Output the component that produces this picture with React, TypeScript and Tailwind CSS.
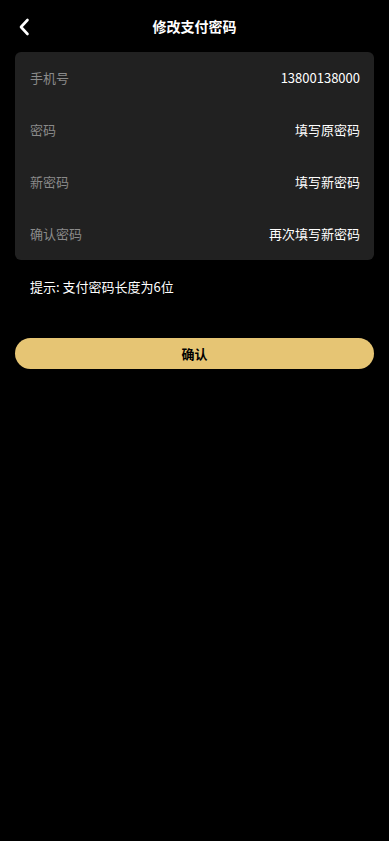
const rows = [
  { label: '手机号', value: '13800138000' },
  { label: '密码', value: '填写原密码' },
  { label: '新密码', value: '填写新密码' },
  { label: '确认密码', value: '再次填写新密码' },
];

export default function App() {
  return (
    <div
      className="min-h-[841px] bg-black text-white"
      style={{ fontFamily: '"Noto Sans CJK SC", "Noto Sans", sans-serif' }}
    >
      {/* Header */}
      <div className="relative flex h-[52px] items-center justify-center">
        <button className="absolute left-[17px] top-[17px] flex h-[20px] w-[14px] items-center justify-center">
          <svg width="12" height="18" viewBox="0 0 12 18" fill="none">
            <path
              d="M9.5 2L3 9l6.5 7"
              stroke="white"
              strokeWidth="2.6"
              strokeLinecap="round"
              strokeLinejoin="round"
            />
          </svg>
        </button>
        <h1 className="text-[14px] font-bold">修改支付密码</h1>
      </div>

      {/* Form card */}
      <div className="mx-[15px] rounded-[6px] bg-[#212121] pl-[15px] pr-[14px]">
        {rows.map((row) => (
          <div key={row.label} className="flex h-[52px] items-center justify-between text-[13px]">
            <span className="text-[#8a8a8a]">{row.label}</span>
            <span className="text-white">{row.value}</span>
          </div>
        ))}
      </div>

      {/* Tip */}
      <p className="mt-[17px] px-[30px] text-[13px] leading-[20px]">提示: 支付密码长度为6位</p>

      {/* Submit */}
      <div className="mt-[41px] px-[15px]">
        <button className="flex h-[31px] w-full items-center justify-center rounded-full bg-[#e6c574] text-[13px] font-bold text-black">
          确认
        </button>
      </div>
    </div>
  );
}
